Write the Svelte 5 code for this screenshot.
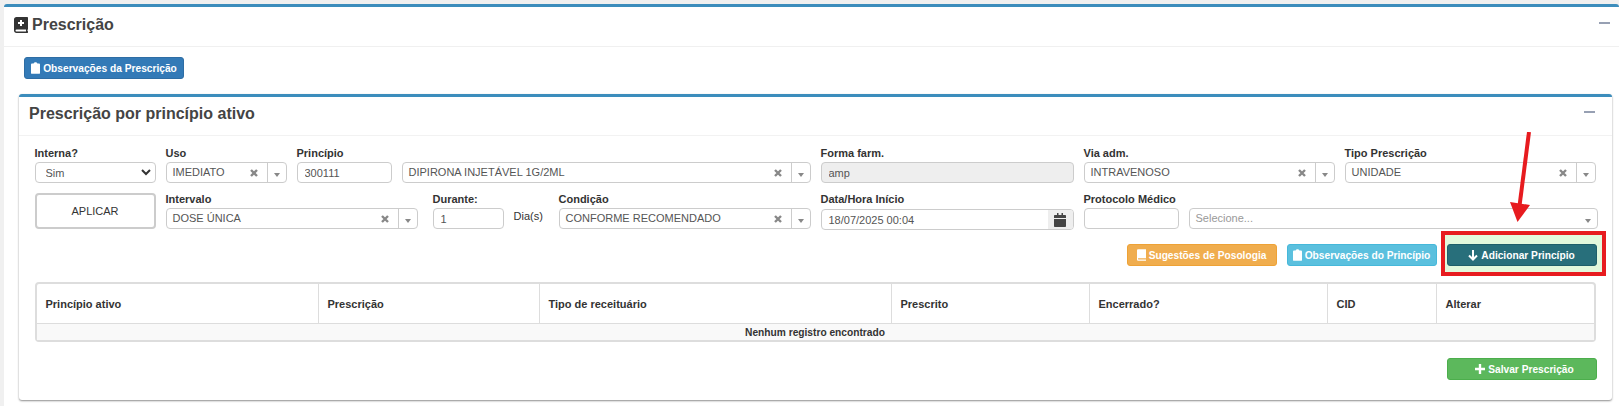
<script lang="ts">
  const columns = [
    { label: 'Princípio ativo', width: 281 },
    { label: 'Prescrição', width: 221 },
    { label: 'Tipo de receituário', width: 352 },
    { label: 'Prescrito', width: 198 },
    { label: 'Encerrado?', width: 238 },
    { label: 'CID', width: 109 },
    { label: 'Alterar', width: 158 }
  ];
</script>

{#snippet select2(value: string, width: number, clearable = true, placeholder = false)}
  <div class="select2" style="width: {width}px">
    <span class="s2-text" class:placeholder>{value}</span>
    {#if clearable}
      <svg class="s2-clear" viewBox="0 0 8 8" width="8" height="8"><path d="M1 1l6 6M7 1L1 7" stroke="#888" stroke-width="2.4" /></svg>
    {/if}
    <span class="s2-arrow"><i></i></span>
  </div>
{/snippet}

{#snippet clipboard()}
  <svg class="ico" viewBox="0 0 10 13" width="9" height="12"><path fill="#fff" d="M3 1.500C3 .7 3.800 0 5 0s2 .7 2 1.500h2c.6 0 1 .4 1 1V12c0 .6-.4 1-1 1H1c-.6 0-1-.4-1-1V2.500c0-.6.4-1 1-1z" /></svg>
{/snippet}

<div class="page">
  <section class="box outer">
    <header class="box-head">
      <h1>
        <svg viewBox="0 0 14 16" width="14" height="16"><path fill="#333" fill-rule="evenodd" d="M2.500 0H13c.6 0 1 .4 1 1v11c0 .4-.2.7-.5.8v1.200h.1c.3 0 .4.3.4.5v1c0 .3-.2.5-.5.500H2.500C1 16 0 15 0 13.500v-11C0 1 1 0 2.500 0zM6 3v2H4v2h2v2h2V7h2V5H8V3zM2.500 12.500c-1.300 0-1.300 2 0 2H12v-2z" /></svg>
        Prescrição
      </h1>
      <span class="minus"></span>
    </header>
    <div class="outer-body">
      <button class="btn blue obs">{@render clipboard()} Observações da Prescrição</button>

      <section class="box inner">
        <header class="box-head inner-head">
          <h2>Prescrição por princípio ativo</h2>
          <span class="minus"></span>
        </header>
        <div class="inner-body">
          <div class="row">
            <label style="width: 121px">
              <span>Interna?</span>
              <span class="select-wrap">
                <select><option>Sim</option></select>
                <svg viewBox="0 0 10 7" width="10" height="7"><path fill="none" stroke="#333" stroke-width="2" d="M1 1l4 4 4-4" /></svg>
              </span>
            </label>
            <div class="field">
              <span class="lbl">Uso</span>
              {@render select2('IMEDIATO', 121)}
            </div>
            <label style="width: 95px">
              <span>Princípio</span>
              <input value="300111" />
            </label>
            <div class="field">
              <span class="lbl">&nbsp;</span>
              {@render select2('DIPIRONA INJETÁVEL 1G/2ML', 409)}
            </div>
            <label style="width: 253px">
              <span>Forma farm.</span>
              <input class="disabled" value="amp" readonly />
            </label>
            <div class="field">
              <span class="lbl">Via adm.</span>
              {@render select2('INTRAVENOSO', 251)}
            </div>
            <div class="field">
              <span class="lbl">Tipo Prescrição</span>
              {@render select2('UNIDADE', 251)}
            </div>
          </div>

          <div class="row second">
            <button class="apply">APLICAR</button>
            <div class="field">
              <span class="lbl">Intervalo</span>
              {@render select2('DOSE ÚNICA', 252)}
            </div>
            <label class="durante">
              <span>Durante:</span>
              <input value="1" />
            </label>
            <span class="dias">Dia(s)</span>
            <div class="field">
              <span class="lbl">Condição</span>
              {@render select2('CONFORME RECOMENDADO', 252)}
            </div>
            <div class="field date">
              <span class="lbl">Data/Hora Início</span>
              <div class="date-input">
                <span>18/07/2025 00:04</span>
                <b>
                  <svg viewBox="0 0 12 14" width="12" height="14"><path fill="#444" d="M3 0h1.500v2h3V0H9v2h2c.6 0 1 .4 1 1v2H0V3c0-.6.4-1 1-1h2zM0 6h12v7c0 .6-.4 1-1 1H1c-.6 0-1-.4-1-1z" /></svg>
                </b>
              </div>
            </div>
            <label class="protocolo">
              <span>Protocolo Médico</span>
              <input />
            </label>
            <div class="field">
              <span class="lbl">&nbsp;</span>
              {@render select2('Selecione...', 409, false, true)}
            </div>
          </div>

          <div class="actions">
            <button class="btn orange">
              <svg class="ico" viewBox="0 0 10 13" width="9" height="12"><path fill="#fff" fill-rule="evenodd" d="M1.500 0H10v10H1.500a1 1 0 0 0 0 1.500H10V13H1.500C.6 13 0 12.300 0 11.500v-10C0 .6.600 0 1.500 0z" /></svg>
              Sugestões de Posologia
            </button>
            <button class="btn cyan">{@render clipboard()} Observações do Princípio</button>
            <span class="highlight">
              <button class="btn teal">
                <svg class="ico" viewBox="0 0 10 11" width="10" height="11"><path fill="none" stroke="#fff" stroke-width="2" d="M5 0v9M1 5.500l4 4 4-4" /></svg>
                Adicionar Princípio
              </button>
            </span>
          </div>

          <table>
            <colgroup>
              {#each columns as c}<col style="width: {c.width}px" />{/each}
            </colgroup>
            <thead>
              <tr>{#each columns as c}<th>{c.label}</th>{/each}</tr>
            </thead>
            <tbody>
              <tr><td colspan="7">Nenhum registro encontrado</td></tr>
            </tbody>
          </table>

          <div class="save">
            <button class="btn green">
              <svg class="ico" viewBox="0 0 11 11" width="10" height="10"><path fill="none" stroke="#fff" stroke-width="2.600" d="M5.500 0v11M0 5.500h11" /></svg>
              Salvar Prescrição
            </button>
          </div>
        </div>
        <svg class="arrow" viewBox="0 0 30 92" width="30" height="92">
          <path fill="none" stroke="#e71b1f" stroke-width="4" d="M19 0L9.500 74" />
          <path fill="#e71b1f" d="M0 70L20 73L7.500 90z" />
        </svg>
      </section>
    </div>
  </section>
</div>

<style>
  :global(body) {
    margin: 0;
    background: #f0f0f0;
    font-family: 'Liberation Sans', Arial, sans-serif;
    color: #333;
  }
  .page {
    height: 406px;
    padding: 4px 0 0 4px;
    box-sizing: border-box;
    overflow: hidden;
  }
  .box {
    background: #fff;
    border-top: 3px solid #3c8dbc;
    border-radius: 3px;
  }
  .outer {
    min-height: 420px;
  }
  .box-head {
    height: 40px;
    box-sizing: border-box;
    border-bottom: 1px solid #f0f0f0;
    display: flex;
    align-items: center;
    justify-content: space-between;
    padding: 0 9px 3px 10px;
  }
  h1 {
    margin: 0;
    font-size: 16px;
    font-weight: bold;
    color: #444;
    display: flex;
    align-items: center;
    gap: 4px;
  }
  .minus {
    width: 11px;
    height: 2px;
    background: #97a0b3;
    margin-bottom: 5px;
  }
  .outer-body {
    padding: 10px 7px 0 14.500px;
  }
  .btn.obs {
    margin-left: 5.500px;
    width: 160px;
    margin-bottom: 15px;
    display: flex;
  }
  .inner {
    position: relative;
    height: 303px;
    box-shadow: 0 1px 2px rgba(0, 0, 0, 0.45);
  }
  .inner-head {
    height: 39px;
    padding: 0 17px 4px 10.500px;
    border-bottom-color: #f2f2f2;
  }
  h2 {
    margin: 0;
    font-size: 16px;
    font-weight: bold;
    color: #444;
  }
  .inner-body {
    padding: 11px 15.500px 0 16px;
  }
  .row {
    display: flex;
    gap: 10px;
    align-items: flex-end;
  }
  .second {
    margin-top: 10px;
    height: 37px;
    align-items: flex-start;
  }
  label, .field {
    display: flex;
    flex-direction: column;
    flex: none;
  }
  label > span:first-child, .lbl {
    font-size: 11px;
    font-weight: bold;
    color: #333;
    line-height: 13px;
    margin-bottom: 2px;
    white-space: nowrap;
  }
  select, input, .select2, .date-input {
    height: 21px;
    box-sizing: border-box;
    border: 1px solid #ccc;
    border-radius: 4px;
    font: 11px 'Liberation Sans', Arial, sans-serif;
    color: #555;
    background: #fff;
    outline: none;
  }
  .select-wrap {
    position: relative;
    display: block;
    height: 21px;
  }
  .select-wrap svg {
    position: absolute;
    right: 5px;
    top: 7px;
    pointer-events: none;
  }
  select {
    width: 100%;
    padding: 0 10px;
    appearance: none;
    display: block;
  }
  input {
    width: 100%;
    padding: 0 7px;
  }
  input.disabled {
    background: #eee;
  }
  .select2 {
    display: flex;
    align-items: center;
    padding-left: 6px;
    flex: none;
  }
  .s2-text {
    flex: 1;
    white-space: nowrap;
    padding-bottom: 2px;
  }
  .placeholder {
    color: #999;
  }
  .s2-clear {
    margin-right: 9px;
  }
  .s2-arrow {
    width: 19px;
    height: 100%;
    border-left: 1px solid #ccc;
    display: flex;
    align-items: center;
    justify-content: center;
    box-sizing: border-box;
    padding-top: 4px;
  }
  .placeholder ~ .s2-arrow {
    border-left-color: transparent;
  }
  .s2-arrow i {
    border: 3px solid transparent;
    border-top: 4px solid #888;
    border-bottom: 0;
  }
  .apply {
    width: 121px;
    height: 36px;
    flex: none;
    box-sizing: border-box;
    background: #fff;
    border: 2px solid #ccc;
    border-radius: 4px;
    font: 11px 'Liberation Sans', Arial, sans-serif;
    color: #333;
    padding: 0;
  }
  .durante {
    width: 71px;
    margin-left: 5px;
  }
  .dias {
    font-size: 11px;
    color: #333;
    margin-top: 17px;
    width: 35px;
    flex: none;
    white-space: nowrap;
  }
  .date {
    width: 253px;
  }
  .date-input {
    display: flex;
    align-items: center;
    justify-content: space-between;
    padding-left: 7px;
    margin-top: 1px;
    overflow: hidden;
  }
  .date-input b {
    width: 25px;
    height: 100%;
    background: #eee;
    display: flex;
    align-items: center;
    justify-content: center;
  }
  .protocolo {
    width: 95px;
  }
  .actions {
    display: flex;
    justify-content: flex-end;
    gap: 10px;
    margin-top: 14px;
  }
  .btn {
    width: 150px;
    height: 22px;
    box-sizing: border-box;
    border: 1px solid transparent;
    border-radius: 3px;
    color: #fff;
    font: bold 10.200px 'Liberation Sans', Arial, sans-serif;
    display: inline-flex;
    align-items: center;
    justify-content: center;
    gap: 3px;
    padding: 0;
    white-space: nowrap;
  }
  .blue { background: #337ab7; border-color: #2e6da4; }
  .orange { background: #f0ad4e; border-color: #eea236; }
  .cyan { background: #5bc0de; border-color: #46b8da; }
  .teal { background: #286f7b; border-color: #1f5f6a; }
  .green { background: #5cb85c; border-color: #4cae4c; padding-left: 6px; }
  .highlight {
    position: relative;
    display: flex;
  }
  .highlight::before {
    content: '';
    position: absolute;
    inset: -13px -9px -10px -6px;
    background: #e2f8dc;
    border: 4px solid #e71b1f;
  }
  .highlight .btn {
    position: relative;
  }
  table {
    width: 1561px;
    margin-top: 16px;
    table-layout: fixed;
    border-collapse: separate;
    border-spacing: 0;
    border: 2px solid #ddd;
    border-radius: 4px;
    font-size: 11px;
    box-sizing: border-box;
  }
  th {
    height: 40px;
    box-sizing: border-box;
    text-align: left;
    padding: 0 9px;
    font-weight: bold;
    color: #333;
    border-bottom: 1px solid #ddd;
    border-left: 1px solid #ddd;
  }
  th:first-child {
    border-left: 0;
    padding-left: 9px;
  }
  td {
    height: 16px;
    padding: 0;
    background: #f9f9f9;
    text-align: center;
    font-size: 10.200px;
    font-weight: bold;
    color: #333;
  }
  .save {
    display: flex;
    justify-content: flex-end;
    margin-top: 16px;
  }
  .ico {
    flex: none;
  }
  .arrow {
    position: absolute;
    right: 72px;
    top: 35px;
  }
</style>
